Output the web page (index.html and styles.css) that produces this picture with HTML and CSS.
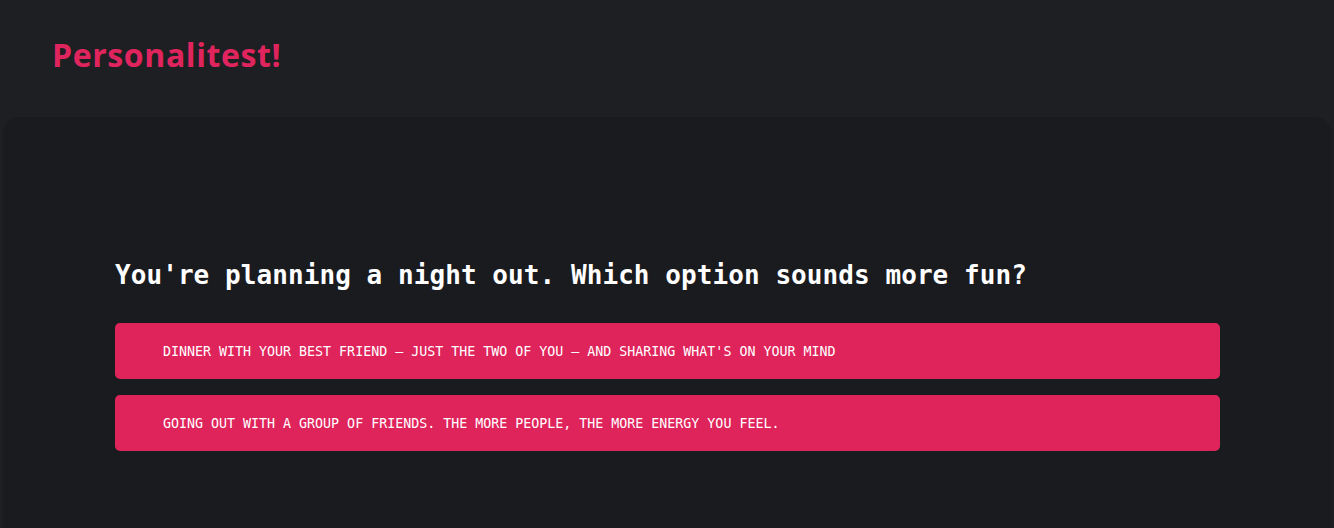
FILE: index.html
```html
<!DOCTYPE html>
<html lang="en">
<head>
<meta charset="utf-8">
<title>Personalitest!</title>
<link rel="stylesheet" href="styles.css">
</head>
<body>
  <header class="header">
    <h1 class="logo">Personalitest!</h1>
  </header>
  <main class="card">
    <section class="question">
      <h2 class="question-title">You're planning a night out. Which option sounds more fun?</h2>
      <div class="options">
        <button class="option">DINNER WITH YOUR BEST FRIEND — JUST THE TWO OF YOU — AND SHARING WHAT'S ON YOUR MIND</button>
        <button class="option">GOING OUT WITH A GROUP OF FRIENDS. THE MORE PEOPLE, THE MORE ENERGY YOU FEEL.</button>
      </div>
    </section>
  </main>
</body>
</html>
```
FILE: styles.css
```css
html, body {
  margin: 0;
  padding: 0;
  height: 100%;
}
body {
  background: #1e1f23;
  overflow: hidden;
  font-family: "DejaVu Sans Mono", monospace;
}
.header {
  height: 117px;
  padding: 0 0 0 52px;
  box-sizing: border-box;
  display: flex;
  align-items: flex-start;
}
.logo {
  margin: 33px 0 0;
  font-family: "Open Sans", "Liberation Sans", sans-serif;
  font-weight: 700;
  font-size: 32px;
  line-height: 44px;
  color: #e0245e;
  letter-spacing: 0.6px;
}
.card {
  margin: 0 3px;
  height: 420px;
  background: #1a1b1f;
  border-radius: 16px 16px 0 0;
  padding: 140px 111px 0 112px;
  box-sizing: border-box;
}
.question-title {
  margin: 0 0 30px 0;
  font-family: "DejaVu Sans Mono", monospace;
  font-weight: 700;
  font-size: 26px;
  line-height: 36px;
  color: #ffffff;
  letter-spacing: 0.07px;
}
.options {
  display: flex;
  flex-direction: column;
  gap: 16px;
}
.option {
  display: block;
  width: 100%;
  height: 56px;
  border: none;
  border-radius: 5px;
  background: #df235b;
  color: #ffffff;
  text-align: left;
  padding: 0 0 0 48px;
  font-family: "DejaVu Sans Mono", monospace;
  font-size: 13.3px;
  letter-spacing: 0;
  cursor: pointer;
}
```
